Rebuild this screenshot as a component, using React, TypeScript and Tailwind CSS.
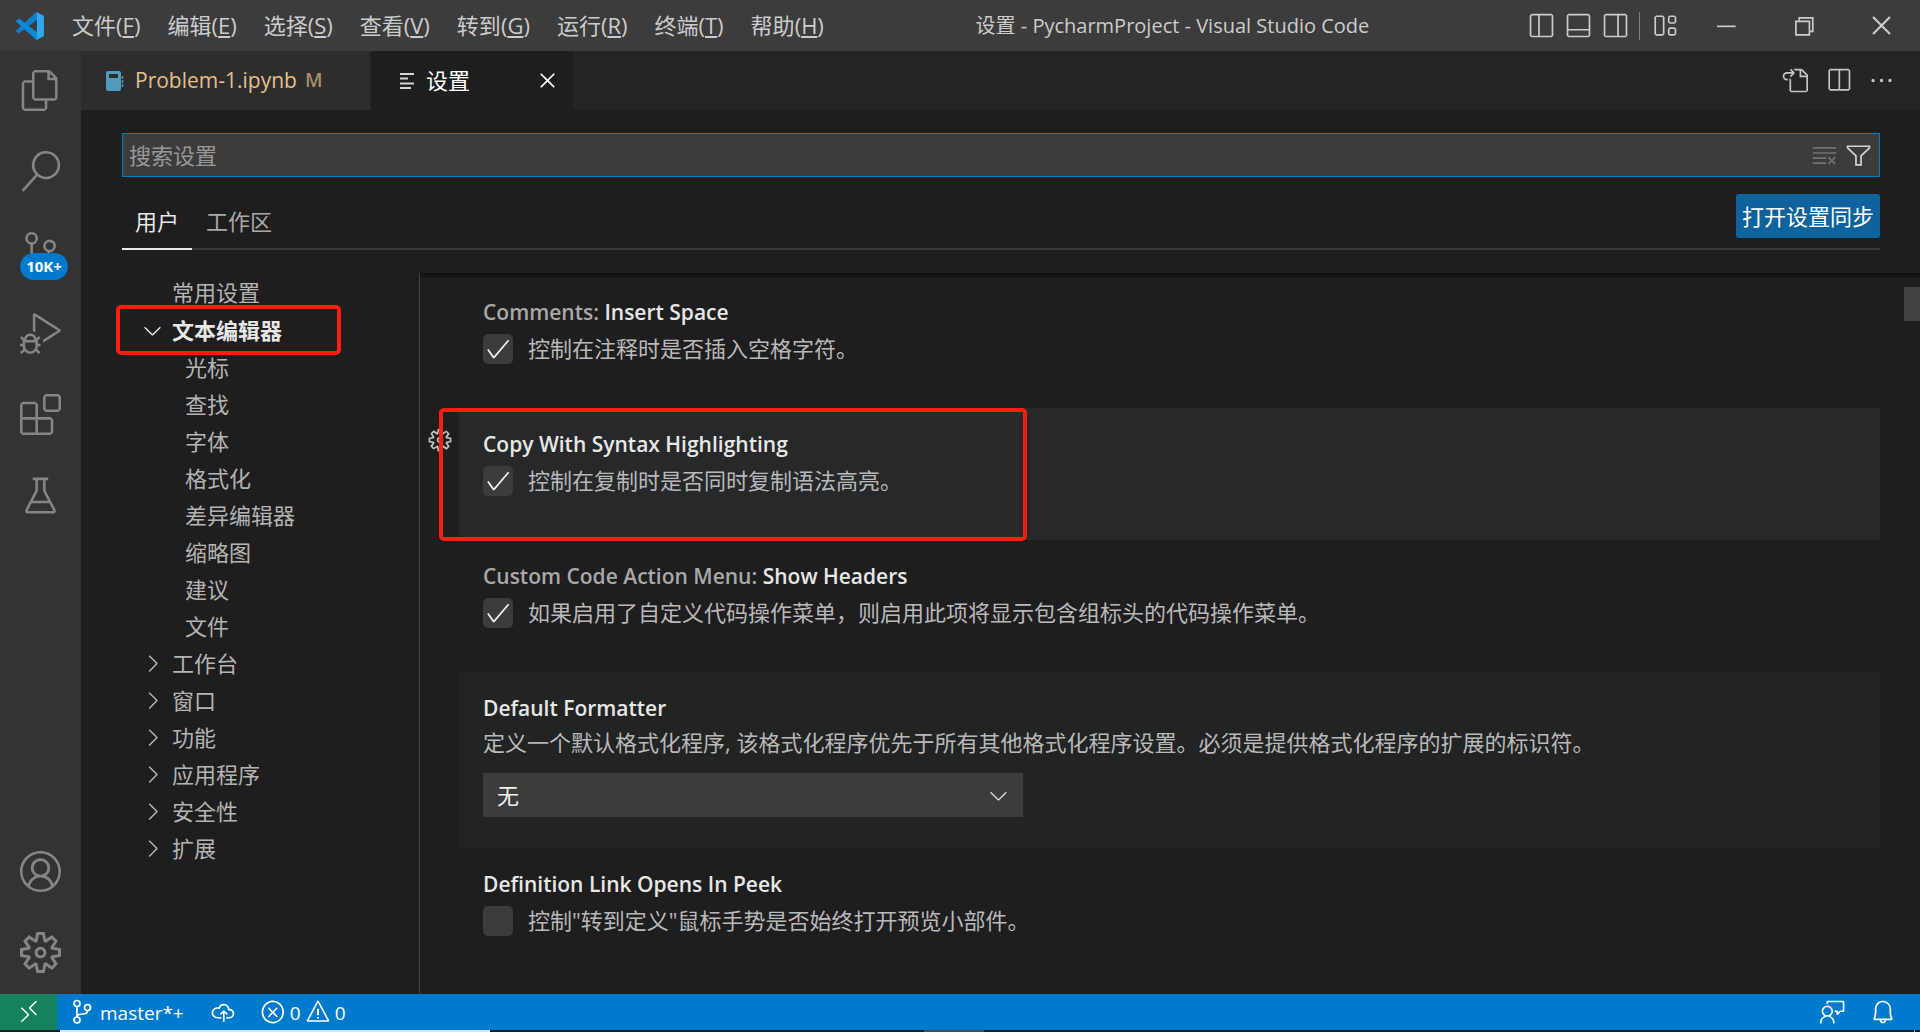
import { useState } from 'react';
import type { ReactNode } from 'react';
import type { IconType } from 'react-icons';
import {
  VscAccount,
  VscBeaker,
  VscBell,
  VscCheck,
  VscChevronDown,
  VscChevronRight,
  VscChromeClose,
  VscChromeMinimize,
  VscChromeRestore,
  VscClearAll,
  VscClose,
  VscCloudUpload,
  VscDebugAlt,
  VscEllipsis,
  VscError,
  VscExtensions,
  VscFeedback,
  VscFiles,
  VscFilter,
  VscGear,
  VscGoToFile,
  VscLayout,
  VscLayoutPanelOff,
  VscLayoutSidebarLeftOff,
  VscLayoutSidebarRightOff,
  VscRemote,
  VscSearch,
  VscSettingsGear,
  VscSourceControl,
  VscSplitHorizontal,
  VscWarning,
} from 'react-icons/vsc';

const menus = [
  { label: '文件', accessKey: 'F' },
  { label: '编辑', accessKey: 'E' },
  { label: '选择', accessKey: 'S' },
  { label: '查看', accessKey: 'V' },
  { label: '转到', accessKey: 'G' },
  { label: '运行', accessKey: 'R' },
  { label: '终端', accessKey: 'T' },
  { label: '帮助', accessKey: 'H' },
];

const activities: { label: string; icon: IconType; badge?: string }[] = [
  { label: '资源管理器', icon: VscFiles },
  { label: '搜索', icon: VscSearch },
  { label: '源代码管理', icon: VscSourceControl, badge: '10K+' },
  { label: '运行和调试', icon: VscDebugAlt },
  { label: '扩展', icon: VscExtensions },
  { label: '测试', icon: VscBeaker },
];

const editorChildren = [
  '光标',
  '查找',
  '字体',
  '格式化',
  '差异编辑器',
  '缩略图',
  '建议',
  '文件',
];

const tocGroups = ['工作台', '窗口', '功能', '应用程序', '安全性', '扩展'];

function VsCodeLogo() {
  return (
    <svg width="28" height="28" viewBox="0 0 100 100" aria-hidden="true">
      <path
        fill="#0f7fc9"
        d="M96 12 75.6 2.2a6.2 6.2 0 0 0-7.1 1.2L2.2 63.9a4.2 4.2 0 0 0 0 6.2l5.5 5a4.2 4.2 0 0 0 5.3.2L92.8 14.7c2.7-2 6.5-.1 6.5 3.2Z"
      />
      <path
        fill="#1089d6"
        d="M96 88 75.6 97.8a6.2 6.2 0 0 1-7.1-1.2L2.2 36.1a4.2 4.2 0 0 1 0-6.2l5.5-5a4.2 4.2 0 0 1 5.3-.2l79.8 60.6c2.7 2 6.5.1 6.5-3.2Z"
      />
      <path
        fill="#35a5f0"
        d="M75.7 97.8a6.2 6.2 0 0 1-7.1-1.2c2.3 2.3 6.2.7 6.2-2.6V5.9c0-3.3-3.9-4.9-6.2-2.6a6.2 6.2 0 0 1 7.1-1.2L96.2 12a6.3 6.3 0 0 1 3.6 5.6v64.800a6.3 6.3 0 0 1-3.6 5.6Z"
      />
    </svg>
  );
}

function NotebookIcon() {
  return (
    <svg width="18" height="20" viewBox="0 0 18 20" aria-hidden="true">
      <rect x="0" y="0" width="15" height="20" rx="2" fill="#519aba" />
      <rect x="3" y="3" width="9" height="4" fill="#2d2d2d" />
      <path d="M16.5 5v3M16.5 9v3M16.5 13v3" stroke="#519aba" strokeWidth="1.5" />
    </svg>
  );
}

function SettingsTabIcon() {
  return (
    <svg width="16" height="18" viewBox="0 0 16 18" aria-hidden="true">
      <path d="M1 2h14M1 6.5h8M1 11.5h14M1 16h11" stroke="#d4d4d4" strokeWidth="1.8" />
    </svg>
  );
}

function GitBranchIcon() {
  return (
    <svg
      width="22"
      height="26"
      viewBox="0 0 22 26"
      fill="none"
      stroke="currentColor"
      strokeWidth="1.7"
      aria-hidden="true"
    >
      <circle cx="6" cy="4.5" r="3" />
      <circle cx="6" cy="21" r="3" />
      <circle cx="16.5" cy="8.5" r="3" />
      <path d="M6 7.5V18M16.5 11.5c0 3-2 3.500-4.500 3.500-3.500 0-6 .5-6 3" />
    </svg>
  );
}

function Checkbox({
  id,
  label,
  defaultChecked,
}: {
  id: string;
  label: string;
  defaultChecked: boolean;
}) {
  const [checked, setChecked] = useState(defaultChecked);

  return (
    <div className="flex items-start gap-[15px] pt-[2px]">
      <span className="relative flex h-[30px] w-[30px] shrink-0">
        <input
          id={id}
          type="checkbox"
          checked={checked}
          onChange={(e) => setChecked(e.target.checked)}
          className="h-[30px] w-[30px] appearance-none rounded-[5px] bg-[#3c3c3c]"
        />
        {checked && (
          <VscCheck
            size={28}
            className="pointer-events-none absolute inset-0 m-auto text-[#f0f0f0]"
          />
        )}
      </span>
      <label htmlFor={id} className="text-[22px] leading-[28px] text-[#b9b9b9]">
        {label}
      </label>
    </div>
  );
}

function SettingRow({
  category,
  title,
  className = '',
  children,
}: {
  category?: string;
  title: string;
  className?: string;
  children: ReactNode;
}) {
  return (
    <section
      className={`relative mr-10 ml-[39px] min-h-[132px] px-6 pt-[21px] pb-[31px] ${className}`}
    >
      <h3 className="mb-[5px] text-[21px] leading-[30px] font-semibold text-[#e7e7e7]">
        {category && <span className="text-[#a9a9a9]">{category}: </span>}
        {title}
      </h3>
      {children}
    </section>
  );
}

function TitleBar() {
  return (
    <header className="flex h-[51px] shrink-0 items-center bg-[#3c3c3c] text-[#cccccc]">
      <div className="flex w-[59px] shrink-0 items-center pl-4">
        <VsCodeLogo />
      </div>
      <nav className="flex gap-px text-[22px]">
        {menus.map((menu) => (
          <button key={menu.accessKey} className="px-[13px] whitespace-nowrap">
            {menu.label}(<span className="underline underline-offset-2">{menu.accessKey}</span>)
          </button>
        ))}
      </nav>
      <h1 className="flex-1 pr-5 text-center text-[20px] whitespace-nowrap">
        设置 - PycharmProject - Visual Studio Code
      </h1>
      <div className="flex items-center gap-[10px]">
        <button aria-label="切换主侧栏">
          <VscLayoutSidebarLeftOff size={27} />
        </button>
        <button aria-label="切换面板">
          <VscLayoutPanelOff size={27} />
        </button>
        <button aria-label="切换辅助侧栏">
          <VscLayoutSidebarRightOff size={27} />
        </button>
        <span className="h-7 w-px bg-[#808080]" />
        <button aria-label="自定义布局" className="ml-px">
          <VscLayout size={27} />
        </button>
      </div>
      <div className="ml-2 flex">
        <button aria-label="最小化" className="flex w-[78px] justify-center">
          <VscChromeMinimize size={27} />
        </button>
        <button aria-label="还原" className="flex w-[78px] justify-center">
          <VscChromeRestore size={27} />
        </button>
        <button aria-label="关闭" className="flex w-[78px] justify-center">
          <VscChromeClose size={27} />
        </button>
      </div>
    </header>
  );
}

function ActivityBar() {
  return (
    <aside className="flex w-[81px] shrink-0 flex-col bg-[#333333] text-[#858585]">
      {activities.map(({ label, icon: Icon, badge }) => (
        <button
          key={label}
          aria-label={label}
          className="relative flex h-[81px] items-center justify-center pb-[2px]"
        >
          <Icon size={41} />
          {badge && (
            <span className="absolute top-10 left-5 flex h-[27px] w-12 items-center justify-center rounded-full bg-[#007acc] text-[15px] font-bold text-white">
              {badge}
            </span>
          )}
        </button>
      ))}
      <button
        aria-label="帐户"
        className="mt-auto flex h-[81px] items-center justify-center pb-[2px]"
      >
        <VscAccount size={41} />
      </button>
      <button aria-label="管理" className="flex h-[81px] items-center justify-center pb-[2px]">
        <VscSettingsGear size={41} />
      </button>
    </aside>
  );
}

function EditorTabs() {
  return (
    <div className="flex h-[59px] shrink-0 bg-[#252526]">
      <button className="mr-px flex w-[289px] items-center bg-[#2d2d2d] pl-[25px] text-[21px] text-[#e2c08d]">
        <NotebookIcon />
        <span className="ml-[11px]">Problem-1.ipynb</span>
        <span className="ml-2 text-[19px] font-semibold text-[#a8906a]">M</span>
      </button>
      <div className="flex w-[202px] items-center bg-[#1e1e1e] pr-3 pl-7 text-[22px] text-white">
        <SettingsTabIcon />
        <span className="ml-[11px]">设置</span>
        <button aria-label="关闭标签页" className="ml-auto">
          <VscClose size={27} />
        </button>
      </div>
      <div className="ml-auto flex items-center gap-4 pr-[25px] text-[#c5c5c5]">
        <button aria-label="打开设置(json)" className="mr-px">
          <VscGoToFile size={27} />
        </button>
        <button aria-label="拆分编辑器">
          <VscSplitHorizontal size={27} />
        </button>
        <button aria-label="更多操作">
          <VscEllipsis size={27} />
        </button>
      </div>
    </div>
  );
}

function SettingsHeader() {
  const [query, setQuery] = useState('');

  return (
    <div className="pt-[23px] pr-10 pl-[41px]">
      <div className="flex h-11 items-center border border-[#007acc] bg-[#3c3c3c] pr-[7px] pl-[6px]">
        <input
          type="text"
          aria-label="搜索设置"
          placeholder="搜索设置"
          value={query}
          onChange={(e) => setQuery(e.target.value)}
          className="min-w-0 flex-1 bg-transparent text-[22px] text-[#cccccc] outline-none placeholder:text-[#989898]"
        />
        <button aria-label="清除搜索" className="mr-[7px] text-[#727272]">
          <VscClearAll size={27} />
        </button>
        <button aria-label="筛选设置" className="text-[#d4d4d4]">
          <VscFilter size={27} />
        </button>
      </div>

      {/* Scope tabs */}
      <div className="mt-[17px] flex h-14 items-start justify-between border-b-2 border-[#3a3a3a]">
        <div className="flex h-14 text-[22px]">
          <button className="border-b-2 border-[#e7e7e7] px-[13px] text-[#e7e7e7]">用户</button>
          <button className="border-b-2 border-transparent px-[14px] text-[#a9a9a9]">
            工作区
          </button>
        </div>
        <button className="h-11 rounded-[3px] bg-[#0e639c] px-[6px] text-[22px] text-white">
          打开设置同步
        </button>
      </div>
    </div>
  );
}

function TableOfContents() {
  return (
    <nav className="w-[338px] shrink-0 pt-px pl-[56px] text-[22px] leading-[37px] text-[#b4b4b4]">
      <a href="#common" className="block pl-[35px]">
        常用设置
      </a>
      <div className="relative">
        <a
          href="#editor"
          className="flex h-[38px] items-center gap-[6px] pl-[2px] font-bold text-[#e7e7e7]"
        >
          <VscChevronDown size={27} className="shrink-0" />
          文本编辑器
        </a>
        <span className="pointer-events-none absolute -top-[6px] -left-[21px] h-[50px] w-[225px] rounded-[5px] border-4 border-[#ff1d10]" />
      </div>
      {editorChildren.map((item) => (
        <a key={item} href="#editor" className="block pl-12">
          {item}
        </a>
      ))}
      {tocGroups.map((item) => (
        <a key={item} href="#group" className="flex items-center gap-[6px] pl-[2px]">
          <VscChevronRight size={27} className="shrink-0" />
          {item}
        </a>
      ))}
    </nav>
  );
}

function SettingsList() {
  return (
    <main className="relative min-w-0 flex-1 border-l border-[#404040] pt-[3px]">
      {/* Scroll shadow and thumb */}
      <div className="absolute inset-x-0 top-0 h-[5px] bg-linear-to-b from-[#101010] to-[#1a1a1a]" />
      <div className="absolute top-[14px] right-0 h-[34px] w-4 bg-[#434343]" />

      <SettingRow category="Comments" title="Insert Space">
        <Checkbox id="insert-space" label="控制在注释时是否插入空格字符。" defaultChecked />
      </SettingRow>

      <SettingRow title="Copy With Syntax Highlighting" className="bg-[#26282a]">
        <Checkbox id="copy-syntax" label="控制在复制时是否同时复制语法高亮。" defaultChecked />
        <button aria-label="更多操作" className="absolute top-[19px] -left-8 text-[#c5c5c5]">
          <VscGear size={26} />
        </button>
        <span className="pointer-events-none absolute top-0 -left-5 h-[133px] w-[588px] rounded-[5px] border-4 border-[#ff1d10]" />
      </SettingRow>

      <SettingRow category="Custom Code Action Menu" title="Show Headers">
        <Checkbox
          id="show-headers"
          label="如果启用了自定义代码操作菜单，则启用此项将显示包含组标头的代码操作菜单。"
          defaultChecked
        />
      </SettingRow>

      <SettingRow title="Default Formatter" className="bg-[#222423]">
        <label htmlFor="formatter" className="block text-[22px] leading-[28px] text-[#b9b9b9]">
          定义一个默认格式化程序, 该格式化程序优先于所有其他格式化程序设置。必须是提供格式化程序的扩展的标识符。
        </label>
        <div className="relative mt-[17px] max-w-[540px]">
          <select
            id="formatter"
            className="block h-11 w-full appearance-none bg-[#3c3c3c] px-[14px] text-[22px] text-[#f0f0f0]"
          >
            <option>无</option>
          </select>
          <VscChevronDown
            size={27}
            className="pointer-events-none absolute top-[9px] right-[11px] text-[#d4d4d4]"
          />
        </div>
      </SettingRow>

      <SettingRow title="Definition Link Opens In Peek">
        <Checkbox
          id="definition-peek"
          label={'控制"转到定义"鼠标手势是否始终打开预览小部件。'}
          defaultChecked={false}
        />
      </SettingRow>
    </main>
  );
}

function StatusBar() {
  return (
    <footer className="flex h-9 shrink-0 items-center bg-[#007acc] text-[19px] text-white">
      <button
        aria-label="打开远程窗口"
        className="flex h-9 w-[57px] items-center justify-center bg-[#16825d]"
      >
        <VscRemote size={26} />
      </button>
      <button className="ml-[14px] flex items-center gap-[7px]">
        <GitBranchIcon />
        <span className="pt-[3px]">master*+</span>
      </button>
      <button aria-label="发布更改" className="ml-[26px]">
        <VscCloudUpload size={26} />
      </button>
      <button className="ml-6 flex items-center gap-1">
        <VscError size={26} />
        <span className="pt-[3px]">0</span>
        <VscWarning size={26} />
        <span className="pt-[3px]">0</span>
      </button>
      <button aria-label="反馈" className="ml-auto">
        <VscFeedback size={26} />
      </button>
      <button aria-label="通知" className="mr-6 ml-6">
        <VscBell size={26} />
      </button>
    </footer>
  );
}

export default function App() {
  return (
    <div className="flex min-h-screen flex-col bg-[#1e1e1e] font-['Open_Sans','Noto_Sans_CJK_SC',sans-serif]">
      <TitleBar />
      <div className="flex flex-1">
        <ActivityBar />
        <div className="flex min-w-0 flex-1 flex-col">
          <EditorTabs />
          <SettingsHeader />
          <div className="mt-[23px] flex flex-1">
            <TableOfContents />
            <SettingsList />
          </div>
        </div>
      </div>
      <StatusBar />
      {/* Top edge of the taskbar */}
      <div className="flex h-[2px] shrink-0 bg-[#1c2021] pl-[60px]">
        <span className="w-[430px] bg-[#e4e4e4]" />
        <span className="ml-[434px] w-[60px] bg-[#4a4d4e]" />
        <span className="mr-[5px] ml-auto w-px bg-[#a0a0a0]" />
      </div>
    </div>
  );
}
